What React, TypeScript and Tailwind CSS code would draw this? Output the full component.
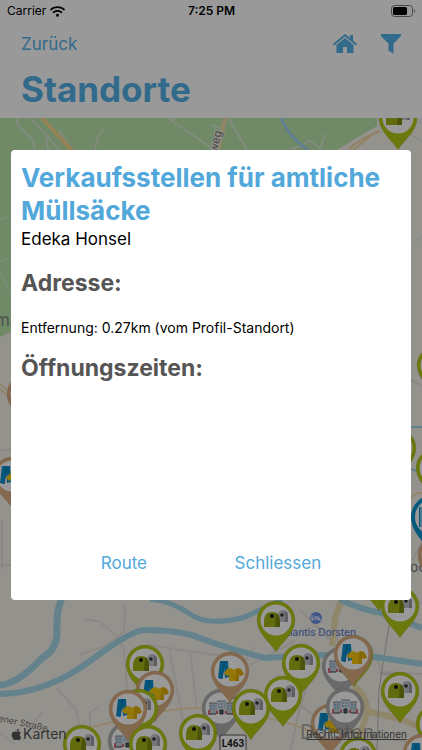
import type { ReactNode } from "react";
import { FaApple, FaWifi } from "react-icons/fa";

type Kind = "glass" | "clothes" | "office" | "blue";

const ringColor: Record<Kind, string> = {
  glass: "#b3c814",
  clothes: "#dcae80",
  office: "#b0b0b0",
  blue: "#0a96d2",
};

function GlassIcon() {
  return (
    <g>
      <path d="M2 2V-5a5 5 0 0 1 10 0V2Z" fill="#c3c5cc" />
      <path d="M9 2V-9a5 5 0 0 1 3 4V2Z" fill="#9a9da6" />
      <circle cx="6" cy="-5" r="1.800" fill="#333" />
      <path d="M-12 7V2C-12-5-9-8-4-8S4-5 4 2V7Z" fill="#a3b316" />
      <path d="M-1 7L0-7Q4-5 4 2V7Z" fill="#7c8a10" />
      <circle cx="-4" cy="-4" r="2" fill="#151515" />
    </g>
  );
}

function ClothesIcon() {
  return (
    <g>
      <path d="M-10-10H-2L-1 6-5 7-6-4-8 8-12 7Z" fill="#0a8fce" />
      <path d="M-6-10V-4L-8 8" stroke="#0573ad" fill="none" />
      <path d="M-3-2L1-3Q4 0 7-3L11-2 14 3 11 5 9 4V10H-1V4L-3 5-6 2Z" fill="#f5c60c" />
      <path d="M7-3L11-2 14 3 11 5 9 4V10H5Z" fill="#dfad0a" />
    </g>
  );
}

function OfficeIcon() {
  return (
    <g>
      <path d="M-12-5H-4V6H-12ZM4-5H12V6H4Z" fill="#c6cbd3" />
      <path d="M-4-7H5V6H-4Z" fill="#dadde2" />
      <path d="M-12-5H-4M-4-7H5M5-5H12" stroke="#81868f" />
      <path d="M-11-2H-5M-11 1H-5M6-2H11M6 1H11M-3-4H4M-3-1H4" stroke="#7fb5d0" strokeWidth="1.500" strokeDasharray="2 1" />
      <path d="M-12 2V7M-4 3V6M5 3V6M12 2V7" stroke="#d1444f" strokeWidth="1.500" />
      <path d="M-11 6H-5M6 6H11M-1 2V6H2V2Z" stroke="#333a48" fill="#596575" />
    </g>
  );
}

function Pin({ x, y, kind }: { x: number; y: number; kind: Kind }) {
  if (kind === "blue") {
    return (
      <g transform={`translate(${x} ${y})`}>
        <path d="M0 40C-5 28-22 17-22 0a22 22 0 0 1 44 0C22 17 5 28 0 40Z" fill={ringColor.blue} />
        <circle r="18" fill="#fff" />
        <path d="M-14-10H8V10H-14Z" fill="#0a96d2" />
        <path d="M-12-10V10" stroke="#fff" />
      </g>
    );
  }
  return (
    <g transform={`translate(${x} ${y})`}>
      <path
        d="M0 32C-4 24-19 14-19 0a19 19 0 0 1 38 0C19 14 4 24 0 32Z"
        fill={ringColor[kind]}
        stroke="#8a8260"
        strokeOpacity="0.350"
        strokeWidth="0.500"
      />
      <circle r="15.500" fill="#fff" />
      {kind === "glass" && <GlassIcon />}
      {kind === "clothes" && <ClothesIcon />}
      {kind === "office" && <OfficeIcon />}
    </g>
  );
}

const pins: [number, number, Kind][] = [
  [398, 118, "glass"],
  [26, 394, "clothes"],
  [12, 476, "clothes"],
  [436, 365, "glass"],
  [397, 448, "glass"],
  [435, 468, "glass"],
  [437, 555, "clothes"],
  [433, 517, "blue"],
  [340, 569, "clothes"],
  [379, 579, "glass"],
  [400, 606, "glass"],
  [276, 620, "glass"],
  [145, 664, "glass"],
  [155, 690, "clothes"],
  [301, 663, "glass"],
  [341, 666, "office"],
  [354, 655, "glass"],
  [353, 654, "clothes"],
  [221, 708, "office"],
  [230, 671, "clothes"],
  [283, 695, "glass"],
  [400, 691, "glass"],
  [139, 708, "glass"],
  [127, 741, "office"],
  [128, 709, "clothes"],
  [251, 708, "glass"],
  [330, 723, "clothes"],
  [345, 707, "office"],
  [435, 724, "glass"],
  [198, 733, "glass"],
  [148, 744, "glass"],
  [82, 744, "glass"],
  [358, 756, "glass"],
  [422, 753, "clothes"],
];

function Line({ d, color, width }: { d: string; color: string; width: number }) {
  return <path d={d} fill="none" stroke={color} strokeWidth={width} strokeLinejoin="round" />;
}

function MapCanvas() {
  return (
    <svg
      className="block h-full w-full"
      viewBox="0 118 422 632"
      preserveAspectRatio="xMidYMin slice"
      fontFamily="Inter, sans-serif"
      role="img"
      aria-label="Karte"
    >
      <rect y="118" width="422" height="632" fill="#f6f3ec" />
      <path d="M0 118H377V126L330 154 200 240 11 332 0 337Z" fill="#bbe6ae" />
      <g>
        <Line d="M17 118V124L32 139 36 155M31 118L46 135 64 155M46 135L49 155M104 129Q94 137 95 155M59 130L75 155M381 118L422 141M168 118L216 151M170 122L175 118M410 118L422 123M229 119L250 155M290 149L302 146 309 140 320 148 326 133M211 125L222 129" color="#dfeadb" width={1.5} />
        <Line d="M0 220L11 216M0 262L11 257M0 270L11 295M422 236L411 246" color="#dce6d6" width={1} />
        <Line d="M42 118L76 155" color="#fad98d" width={4} />
        <Line d="M225 118L217 155" color="#f5dfae" width={4} />
        <Line d="M281 118Q287 135 309 151" color="#a4d4f0" width={3} />
        <Line d="M377 131L347 155M380 131Q354 141 344 155" color="#f4d9a6" width={2} />
        <Line d="M0 384L11 393M0 389L11 398M411 498Q417 492 422 493" color="#f6d99f" width={1.5} />
        <Line d="M0 450H11M0 480L11 487M2 520V570M0 565H11M411 380L422 386M413 560L422 541M411 596L422 604" color="#e2dfd9" width={1.5} />
        <Line d="M411 427H422M411 469L422 473" color="#a2d8ed" width={2} />
      </g>
      <g>
        <Line d="M80 655L105 646 124 632 125 605M85 619L100 622 118 637 124 650 130 730M57 688L76 710 80 728M148 645L250 660M169 648L185 730M190 650L197 710M230 680L255 647M250 665L295 641M22 742L32 725 42 712M0 733L15 744M90 750V712L98 708" color="#e9e5de" width={2} />
        <Line d="M300 705L320 720M318 650L298 715 291 750M340 595L332 620 340 650M384 660L422 661M379 672L422 674M300 610L330 640M370 735L422 745M370 645L382 671" color="#e6e2d9" width={2} />
        <Line d="M70 732Q125 719 160 712T220 710Q275 716 310 731L360 732" color="#f6e0b0" width={2} />
        <Line d="M343 600Q336 610 334 628L332 646M354 686Q367 696 367 711L403 720 422 728M367 713L355 750" color="#f0dfb1" width={6} />
        <Line d="M389 625L379 690 377 750M380 674H400" color="#bdbab3" width={1} />
        <Line d="M62 598Q56 611 57 630T42 658Q18 684 0 685" color="#a5d9ea" width={7} />
        <Line d="M0 694Q47 693 90 661T145 630Q180 630 200 638T265 658Q345 652 382 658L422 664" color="#a5d9ea" width={6} />
        <Line d="M150 599Q172 601 190 614T245 617L282 600" color="#a5d9ea" width={5} />
        <Line d="M340 600Q363 610 382 613L422 628" color="#a5d9ea" width={6} />
      </g>
      <text transform="translate(217 153) rotate(-78)" fontSize="11" fill="#77726a" stroke="#f6f3ec" strokeWidth="2" paintOrder="stroke">
        weg
      </text>
      <text x="-5" y="326" fontSize="17" fill="#878787">m</text>
      <text x="410" y="572" fontSize="14" fill="#777">oc</text>
      <text transform="translate(-2 721) rotate(12)" fontSize="9" fill="#77726a">
        ener Straße
      </text>
      <circle cx="316" cy="618" r="6" fill="#6c93e5" />
      <path d="M312 615V621M312 619H320V621M314 617H319V619" stroke="#fff" strokeWidth="1" fill="none" />
      <text x="356" y="636" textAnchor="end" fontSize="10" fontWeight="500" fill="#6481ce">
        Atlantis Dorsten
      </text>
      {pins.map(([x, y, kind]) => (
        <Pin key={`${x}-${y}`} x={x} y={y} kind={kind} />
      ))}
      <rect x="220" y="735" width="26" height="20" rx="2" fill="#fff" stroke="#555" />
      <text x="233" y="747" textAnchor="middle" fontSize="10" fontFamily="Roboto, sans-serif" fontWeight="700" fill="#222">
        L463
      </text>
      <text x="300" y="739" fontSize="20" fill="#8b8780" fillOpacity="0.700">
        Dorsten
      </text>
    </svg>
  );
}

function HomeIcon() {
  return (
    <svg width="24" height="20" viewBox="0 0 24 20" fill="currentColor" aria-hidden="true">
      <path d="M12 0L0 10 1 11.500 12 2.500 23 11.500 24 10 20 6.500V1H17V4Z" />
      <path d="M12 4L3.500 11V19H10V13H14V19H20.500V11Z" />
    </svg>
  );
}

function FilterIcon() {
  return (
    <svg width="20" height="20" viewBox="0 0 20 20" fill="currentColor" aria-hidden="true">
      <path d="M0 0H20V2L12.500 9.500V20L7.500 16.500V9.500L0 2Z" />
    </svg>
  );
}

function BatteryIcon() {
  return (
    <svg width="25" height="12" viewBox="0 0 25 12" aria-hidden="true">
      <rect x="0.500" y="0.500" width="21" height="11" rx="3" fill="none" stroke="#777" />
      <rect x="2" y="2" width="14" height="8" rx="1.500" />
      <path d="M23 4Q25 6 23 8Z" fill="#777" />
    </svg>
  );
}

function LinkButton({ children }: { children: ReactNode }) {
  return (
    <button type="button" className="text-[17px] leading-6 text-[#52a8da]">
      {children}
    </button>
  );
}

export default function App() {
  return (
    <div className="relative flex h-screen flex-col overflow-hidden bg-white font-[Inter,sans-serif] text-black">
      <header className="shrink-0">
        <div className="grid h-[22px] grid-cols-3 items-center pr-1.5 pl-[7px] text-xs">
          <div className="flex items-center gap-1">
            <span>Carrier</span>
            <FaWifi size={15} aria-hidden="true" />
          </div>
          <span className="text-center font-semibold">7:25 PM</span>
          <div className="flex justify-end">
            <BatteryIcon />
          </div>
        </div>
        <nav className="flex h-11 items-center justify-between px-[21px] text-[#52b1e6]">
          <button type="button" className="text-[17px] leading-6">
            Zurück
          </button>
          <div className="flex items-center gap-6">
            <button type="button" aria-label="Startseite">
              <HomeIcon />
            </button>
            <button type="button" aria-label="Filter">
              <FilterIcon />
            </button>
          </div>
        </nav>
        <h1 className="h-[52px] px-[21px] text-[35px] leading-[46px] font-bold text-[#52b1e6]">Standorte</h1>
      </header>

      <main className="relative min-h-0 flex-1">
        <MapCanvas />
        <div className="absolute bottom-1.5 left-[10px] flex items-center text-sm leading-5 text-[#555]">
          <FaApple size={13} aria-hidden="true" />
          Karten
        </div>
        <a href="#rechtliches" className="absolute right-[15px] bottom-2 text-[10px] leading-4 text-[#555] underline">
          Rechtl. Informationen
        </a>
      </main>

      <div className="absolute inset-0 flex bg-black/40 px-[11px] py-[150px]">
        <section
          role="dialog"
          aria-modal="true"
          aria-labelledby="dialog-title"
          className="flex flex-1 flex-col rounded-sm bg-white px-2.5 pt-[11px] pb-[25px]"
        >
          <h2 id="dialog-title" className="text-[26px] leading-[33px] font-bold text-[#52a8da]">
            Verkaufsstellen für amtliche Müllsäcke
          </h2>
          <p className="text-[17px] leading-6">Edeka Honsel</p>
          <h3 className="mt-4 text-[23px] leading-8 font-bold text-[#555]">Adresse:</h3>
          <p className="mt-[19px] text-sm leading-5">Entfernung: 0.27km (vom Profil-Standort)</p>
          <h3 className="mt-3.5 text-[23px] leading-8 font-bold text-[#555]">Öffnungszeiten:</h3>
          <div className="mt-auto flex justify-around px-9">
            <LinkButton>Route</LinkButton>
            <LinkButton>Schliessen</LinkButton>
          </div>
        </section>
      </div>
    </div>
  );
}
